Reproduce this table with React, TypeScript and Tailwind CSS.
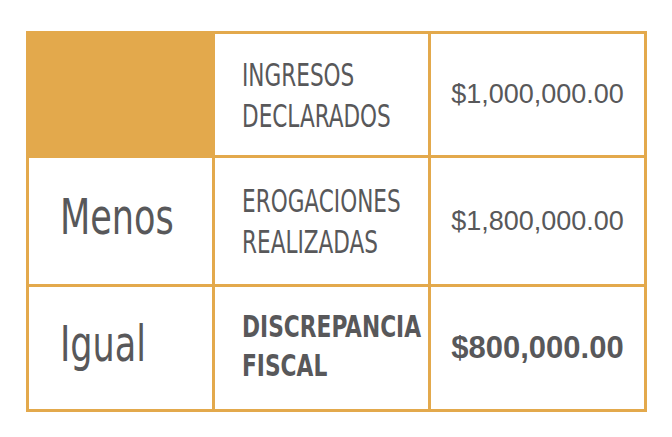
import React from 'react';

type Row = {
  label?: string;
  concept: [string, string];
  amount: string;
  bold?: boolean;
  head?: boolean;
};

const rows: Row[] = [
  { concept: ['INGRESOS', 'DECLARADOS'], amount: '$1,000,000.00', head: true },
  { label: 'Menos', concept: ['EROGACIONES', 'REALIZADAS'], amount: '$1,800,000.00' },
  { label: 'Igual', concept: ['DISCREPANCIA', 'FISCAL'], amount: '$800,000.00', bold: true },
];

const narrow = "font-['DejaVu_Sans_Condensed','Liberation_Sans',sans-serif]";

const App: React.FC = () => {
  return (
    <div className="w-[672px] h-[437px] bg-white pt-[31px] pl-[26px]">
      <div className="w-[621px] grid grid-cols-[183px_213px_213px] grid-rows-[121px_126px_122px] gap-[3px] p-[3px] bg-[#e3a94c] text-[#58585a]">
        {rows.map((row, i) => (
          <React.Fragment key={i}>
            {row.head ? (
              <div className="bg-[#e3a94c]" />
            ) : (
              <div className="bg-white flex items-center pl-[31px] pb-[8px]">
                <span className={`${narrow} text-[50px] leading-none scale-x-[0.78] origin-left whitespace-nowrap`}>
                  {row.label}
                </span>
              </div>
            )}
            <div className={`bg-white flex items-center pl-[27px] ${row.bold ? 'pb-[5px]' : 'pt-[2px]'}`}>
              <div
                className={`${narrow} ${row.bold ? 'font-bold text-[31px] leading-[39px] scale-x-[0.78]' : 'text-[32px] leading-[41px] scale-x-[0.75]'} origin-left whitespace-nowrap`}
              >
                <div>{row.concept[0]}</div>
                <div>{row.concept[1]}</div>
              </div>
            </div>
            <div className="bg-white flex items-center justify-center">
              <span
                className={`font-['Liberation_Sans',Arial,sans-serif] ${row.bold ? 'font-bold text-[31px]' : 'text-[27px]'} whitespace-nowrap`}
              >
                {row.amount}
              </span>
            </div>
          </React.Fragment>
        ))}
      </div>
    </div>
  );
};

export default App;
